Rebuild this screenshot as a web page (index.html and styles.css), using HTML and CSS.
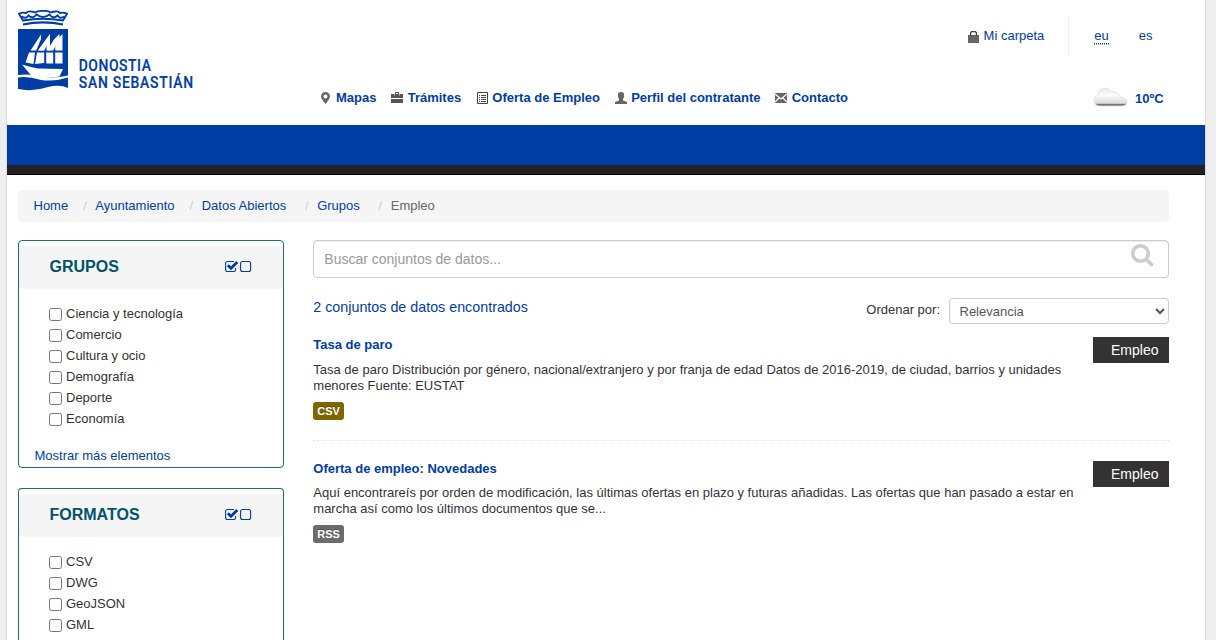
FILE: index.html
```html
<!DOCTYPE html>
<html lang="es">
<head>
<meta charset="utf-8">
<title>Datos Abiertos - Donostia / San Sebastián</title>
<link rel="stylesheet" href="styles.css">
</head>
<body>
<div class="page">
  <header class="header">
    <a class="logo" href="#">
      <svg width="180" height="84" viewBox="0 0 180 84">
        <g fill="none" stroke="#003da5" stroke-width="1.900">
          <path d="M1 3.800Q4 2 8 3Q10 1 13 1.500Q15 1.500 17 2.500Q20 .8 25 .9Q30 .8 33 2.500Q35 1.500 37 1.500Q40 1 42 3Q46 2 49 3.800L45 10.500Q25 7 5 10.500Z"/>
          <path d="M3.500 6.500Q8 9.500 10.500 5.500Q15 9.500 18.500 4.500Q25 9.500 31.500 4.500Q35 9.500 39.500 5.500Q42 9.500 46.500 6.500"/>
          <path stroke-width="2.200" d="M5 14.500Q25 10.300 45 14.500"/>
        </g>
        <path fill="#003da5" d="M0 19H50V78Q42 74 30 77Q15 82 0 79Z"/>
        <g fill="#fff">
          <path d="M23 24.500 12.500 40.500H18.200L23 29Z"/>
          <path d="M11 42.500H17L15.500 54L7.500 52.500Z"/>
          <path d="M32 24V40.500H28.500V30L26 40.500H20Z"/>
          <path d="M32 24 20 40.500H26.200L32 30Z"/>
          <path d="M19 42.500H26.200V53L17 54Z"/>
          <path d="M41.500 24 35.500 30 29.500 40.500H35.200L41.500 28Z"/>
          <path d="M28.200 42.500H35.200V53.500H28.200Z"/>
          <path d="M44.500 24 37.200 32V40.500H44.500ZM37.200 42.500H44.500V53.500H37.200Z"/>
          <path d="M4 54.500 13 57 20 58.500 45 59 41.500 66.500Q28 69 13.500 66Z"/>
          <path d="M0 65Q10 63.500 20 66Q34 69 50 65.500V67.500Q36 72 23 70Q10 66 0 67.500Z"/>
        </g>
        <g class="logo-text" transform="scale(.88 1)">
          <text x="69" y="61" textLength="82" lengthAdjust="spacing">DONOSTIA</text>
          <text x="69" y="78.500" textLength="130" lengthAdjust="spacing">SAN SEBASTIÁN</text>
        </g>
      </svg>
    </a>
    <nav class="services">
      <a href="#"><svg class="ico" width="12" height="12" viewBox="0 0 12 12"><path fill="#666" fill-rule="evenodd" d="M5.500 0A4.500 4.500 0 0 0 1 4.500C1 7 4 9.500 5.500 12C7 9.500 10 7 10 4.500A4.500 4.500 0 0 0 5.500 0ZM5.500 2.500a2 2 0 1 1 0 4a2 2 0 1 1 0-4Z"/></svg>Mapas</a>
      <a href="#"><svg class="ico near" width="12" height="12" viewBox="0 0 12 12"><path fill="#555" fill-rule="evenodd" d="M4 2V0H8V2H12V6H0V2ZM5 1V2H7V1ZM0 7H12V11H0Z"/><path fill="#999" d="M3 2h1v2H3zM8 2h1v2H8z"/></svg>Trámites</a>
      <a href="#"><svg class="ico" width="12" height="12" viewBox="0 0 12 12"><path fill="none" stroke="#444" d="M1.500.5h10v11h-10z"/><path stroke="#444" d="M3 3.500h1M5 3.500h5M3 5.500h1M5 5.500h5M3 7.500h1M5 7.500h5M3 9.500h1M5 9.500h5"/></svg>Oferta de Empleo</a>
      <a href="#"><svg class="ico" width="12" height="12" viewBox="0 0 12 12"><path fill="#666" d="M3 2Q3 0 6 0Q9 0 9 2V5L8 7V8.500L12 10V12H0V10L4 8.500V7L3 5Z"/></svg>Perfil del contratante</a>
      <a href="#"><svg class="ico near" width="12" height="12" viewBox="0 0 12 12"><path fill="#666" d="M0 1h12v10H0z"/><path fill="none" stroke="#fff" stroke-width="1.200" d="M0 2 6 7 12 2M0 10 4 6M12 10 8 6"/></svg>Contacto</a>
    </nav>
    <div class="tools">
      <div class="account">
        <a class="folder" href="#"><svg width="11" height="12" viewBox="0 0 11 12"><path fill="#666" d="M0 4h11v8H0z"/><path fill="none" stroke="#444" stroke-width="1.300" d="M2.600 5V1.700L3.600.7H7.400L8.400 1.700V5"/><path fill="#fff" d="M4 3h3v1H4z"/></svg>Mi carpeta</a>
        <div class="langs"><a class="current" href="#"><abbr title="euskara">eu</abbr></a><a href="#">es</a></div>
      </div>
      <div class="weather">
        <svg width="35" height="20" viewBox="0 0 35 20">
          <defs><linearGradient id="cloud" x1="0" y1="0" x2="0" y2="1"><stop offset="0" stop-color="#e8e8e8"/><stop offset=".4" stop-color="#fafafa"/><stop offset=".85" stop-color="#ddd"/><stop offset=".9" stop-color="#777"/><stop offset="1" stop-color="#777"/></linearGradient></defs>
          <path fill="url(#cloud)" stroke="#ddd" stroke-width=".7" d="M6 19Q1 18 1 13Q1 9 5 8Q6 1 12 1Q16 1 18 5Q24 3 27 10Q34 10 34 15Q34 18 30 19Z"/>
        </svg>
        <strong>10ºC</strong>
      </div>
    </div>
  </header>
  <div class="bar"></div>
  <main class="content">
    <ol class="breadcrumb">
      <li><a href="#">Home</a></li>
      <li><a href="#">Ayuntamiento</a></li>
      <li><a href="#">Datos Abiertos</a></li>
      <li><a href="#">Grupos</a></li>
      <li>Empleo</li>
    </ol>
    <div class="columns">
      <aside class="sidebar">
        <section class="facet">
          <div class="facet-head"><h2>GRUPOS</h2>
            <a class="toggles" href="#"><svg width="28" height="14" viewBox="0 0 28 14"><g fill="none" stroke="#003da5" stroke-width="1.100"><path d="M10.500 8V10Q10.500 11.500 9 11.500H2.500Q.6 11.500 .6 9.500V3.500Q.6 1.500 2.500 1.500H9"/><rect x="15.600" y="1.500" width="10" height="10" rx="2"/><path stroke-width="2.800" d="M2.800 5.300 6 8.300 12.300 2"/></g></svg></a>
          </div>
          <div class="options">
            <label><input type="checkbox">Ciencia y tecnología</label>
            <label><input type="checkbox">Comercio</label>
            <label><input type="checkbox">Cultura y ocio</label>
            <label><input type="checkbox">Demografía</label>
            <label><input type="checkbox">Deporte</label>
            <label><input type="checkbox">Economía</label>
          </div>
          <a class="more" href="#">Mostrar más elementos</a>
        </section>
        <section class="facet last">
          <div class="facet-head"><h2>FORMATOS</h2>
            <a class="toggles" href="#"><svg width="28" height="14" viewBox="0 0 28 14"><g fill="none" stroke="#003da5" stroke-width="1.100"><path d="M10.500 8V10Q10.500 11.500 9 11.500H2.500Q.6 11.500 .6 9.500V3.500Q.6 1.500 2.500 1.500H9"/><rect x="15.600" y="1.500" width="10" height="10" rx="2"/><path stroke-width="2.800" d="M2.800 5.300 6 8.300 12.300 2"/></g></svg></a>
          </div>
          <div class="options">
            <label><input type="checkbox">CSV</label>
            <label><input type="checkbox">DWG</label>
            <label><input type="checkbox">GeoJSON</label>
            <label><input type="checkbox">GML</label>
          </div>
        </section>
      </aside>
      <section class="results">
        <form class="search">
          <input type="text" placeholder="Buscar conjuntos de datos..." aria-label="Buscar">
          <svg width="23" height="23" viewBox="0 0 23 23"><g fill="none" stroke="#ccc"><circle cx="9.500" cy="9.500" r="7.700" stroke-width="3.500"/><path stroke-width="3.800" stroke-linecap="round" d="M15.500 15.500 20.500 20.500"/></g></svg>
        </form>
        <div class="summary">
          <h1>2 conjuntos de datos encontrados</h1>
          <label class="order">Ordenar por: <select><option>Relevancia</option></select></label>
        </div>
        <article class="dataset">
          <div class="info">
            <h3><a href="#">Tasa de paro</a></h3>
            <p>Tasa de paro Distribución por género, nacional/extranjero y por franja de edad Datos de 2016-2019, de ciudad, barrios y unidades menores Fuente: EUSTAT</p>
            <span class="label csv">CSV</span>
          </div>
          <span class="tag">Empleo</span>
        </article>
        <article class="dataset">
          <div class="info">
            <h3><a href="#">Oferta de empleo: Novedades</a></h3>
            <p>Aquí encontrareís por orden de modificación, las últimas ofertas en plazo y futuras añadidas. Las ofertas que han pasado a estar en marcha así como los últimos documentos que se...</p>
            <span class="label rss">RSS</span>
          </div>
          <span class="tag">Empleo</span>
        </article>
      </section>
    </div>
  </main>
</div>
</body>
</html>
```

FILE: styles.css
```css
* { box-sizing: border-box; }
body {
  margin: 0;
  background: #eee;
  color: #333;
  font: 13px/16px "Liberation Sans", Arial, sans-serif;
}
a { color: #003da5; text-decoration: none; }
svg { display: block; flex: none; }
h1, h2, h3, p { margin: 0; }

.page {
  width: 1200px;
  height: 640px;
  margin-left: 6px;
  border: solid #ddd;
  border-width: 0 1px;
  background: #fff;
}

.header { display: flex; height: 125px; padding-left: 11px; }
.logo { width: 302px; padding-top: 10px; }
.logo-text { fill: #003da5; stroke: #003da5; stroke-width: .2px; font: 500 15.800px Roboto, sans-serif; }

.services { display: flex; gap: 15.200px; padding-top: 90px; font-weight: bold; white-space: nowrap; }
.services a { display: flex; align-items: flex-start; height: 16px; }
.ico { margin: 2px 4px 0 0; }
.ico.near { margin: 2px 5px 0 -1px; }

.tools { width: 237px; margin-left: auto; }
.account { display: flex; height: 85px; padding-top: 16px; }
.folder { display: flex; gap: 4.600px; width: 101px; height: 40px; padding-top: 12px; border-right: 1px solid #eee; white-space: nowrap; }
.folder svg { margin-top: 3px; }
.langs { display: flex; gap: 30px; padding: 12px 0 0 25.300px; }
.langs abbr { text-decoration: none; border-bottom: 1px dotted #003da5; }
.langs .current { height: 17px; border-bottom: 1px dotted #999; }
.weather { display: flex; gap: 7px; padding: 2px 0 0 125px; color: #003da5; }
.weather strong { padding-top: 4px; }

.bar { height: 50px; background: #222; border-top: 40px solid #003da5; border-bottom: 1px solid #000; }

.content { padding: 15px 36px 0 11px; }
.breadcrumb {
  display: flex;
  height: 32px;
  margin: 0 0 18px;
  padding: 8px 15.500px;
  list-style: none;
  background: #f5f5f5;
  border-radius: 4px;
  color: #666;
}
.breadcrumb li + li::before { content: "/"; color: #ccc; padding: 0 8.500px 0 15px; }
.breadcrumb li:nth-child(n+4)::before { padding-left: 18.800px; }

.columns { display: flex; gap: 29px; }
.sidebar { width: 266px; flex: none; }
.facet { height: 228px; margin-bottom: 20px; padding-top: 5px; border: 1px solid #1a6b81; border-radius: 4px; }
.facet.last { height: 152px; margin-bottom: 0; border-bottom: 0; border-radius: 4px 4px 0 0; }
.facet-head {
  display: flex;
  align-items: center;
  justify-content: space-between;
  height: 43px;
  padding: 0 30px 2px 30.500px;
  background: #f5f5f5;
  border-radius: 4px;
}
.facet-head h2 { color: #00536b; font-size: 16px; line-height: 20px; }
.options { display: flex; flex-direction: column; height: 157px; padding: 14px 30px 0; }
.last .options { height: 98px; }
.options label { display: flex; align-items: center; flex: none; height: 21px; }
.options input { width: 13px; height: 13px; margin: 1px 4px 0 0; }
.more { display: block; padding-left: 15.500px; margin-top: 2px; }

.results { flex: 1; }
.search { position: relative; height: 38px; }
.search input {
  display: block;
  width: 100%;
  height: 38px;
  padding: 0 40px 0 10.300px;
  border: 1px solid #ccc;
  border-radius: 4px;
  box-shadow: inset 0 1px 1px rgba(0, 0, 0, .075);
  font: 14px "Liberation Sans", Arial, sans-serif;
}
.search input::placeholder { color: #999; }
.search svg { position: absolute; top: 4px; right: 15px; }
.summary { display: flex; justify-content: space-between; height: 46px; margin-top: 20px; }
.summary h1 { padding-left: .3px; color: #003da5; font-size: 14.300px; font-weight: normal; line-height: 18px; }
.order { display: flex; gap: 9px; line-height: 24px; }
.order select {
  width: 220px;
  height: 26px;
  padding: 0 5.500px;
  border: 1px solid #ccc;
  border-radius: 4px;
  background: #fff;
  color: #555;
  font: 13px "Liberation Sans", Arial, sans-serif;
}

.dataset { display: flex; align-items: flex-start; justify-content: space-between; min-height: 97px; margin-top: -7px; padding-bottom: 20px; }
.dataset + .dataset { margin-top: 0; padding-top: 20px; border-top: 1px dotted #ddd; }
.info { width: 770px; }
.dataset h3 { padding-left: .3px; font-size: 13px; line-height: 16px; }
.dataset p { margin: 9px 0 8px; padding-left: .3px; }
.dataset + .dataset p { margin-top: 8px; }
.label {
  display: block;
  width: 31px;
  height: 18px;
  border-radius: 3px;
  color: #fff;
  font-size: 11px;
  font-weight: bold;
  line-height: 18px;
  text-align: center;
  text-shadow: 0 -1px 0 rgba(0, 0, 0, .25);
}
.csv { background: #7f6600; }
.rss { background: #6b6b6b; }
.tag { width: 76px; height: 26px; padding-left: 18px; background: #333; color: #fff; font-size: 14px; line-height: 26px; }
```
